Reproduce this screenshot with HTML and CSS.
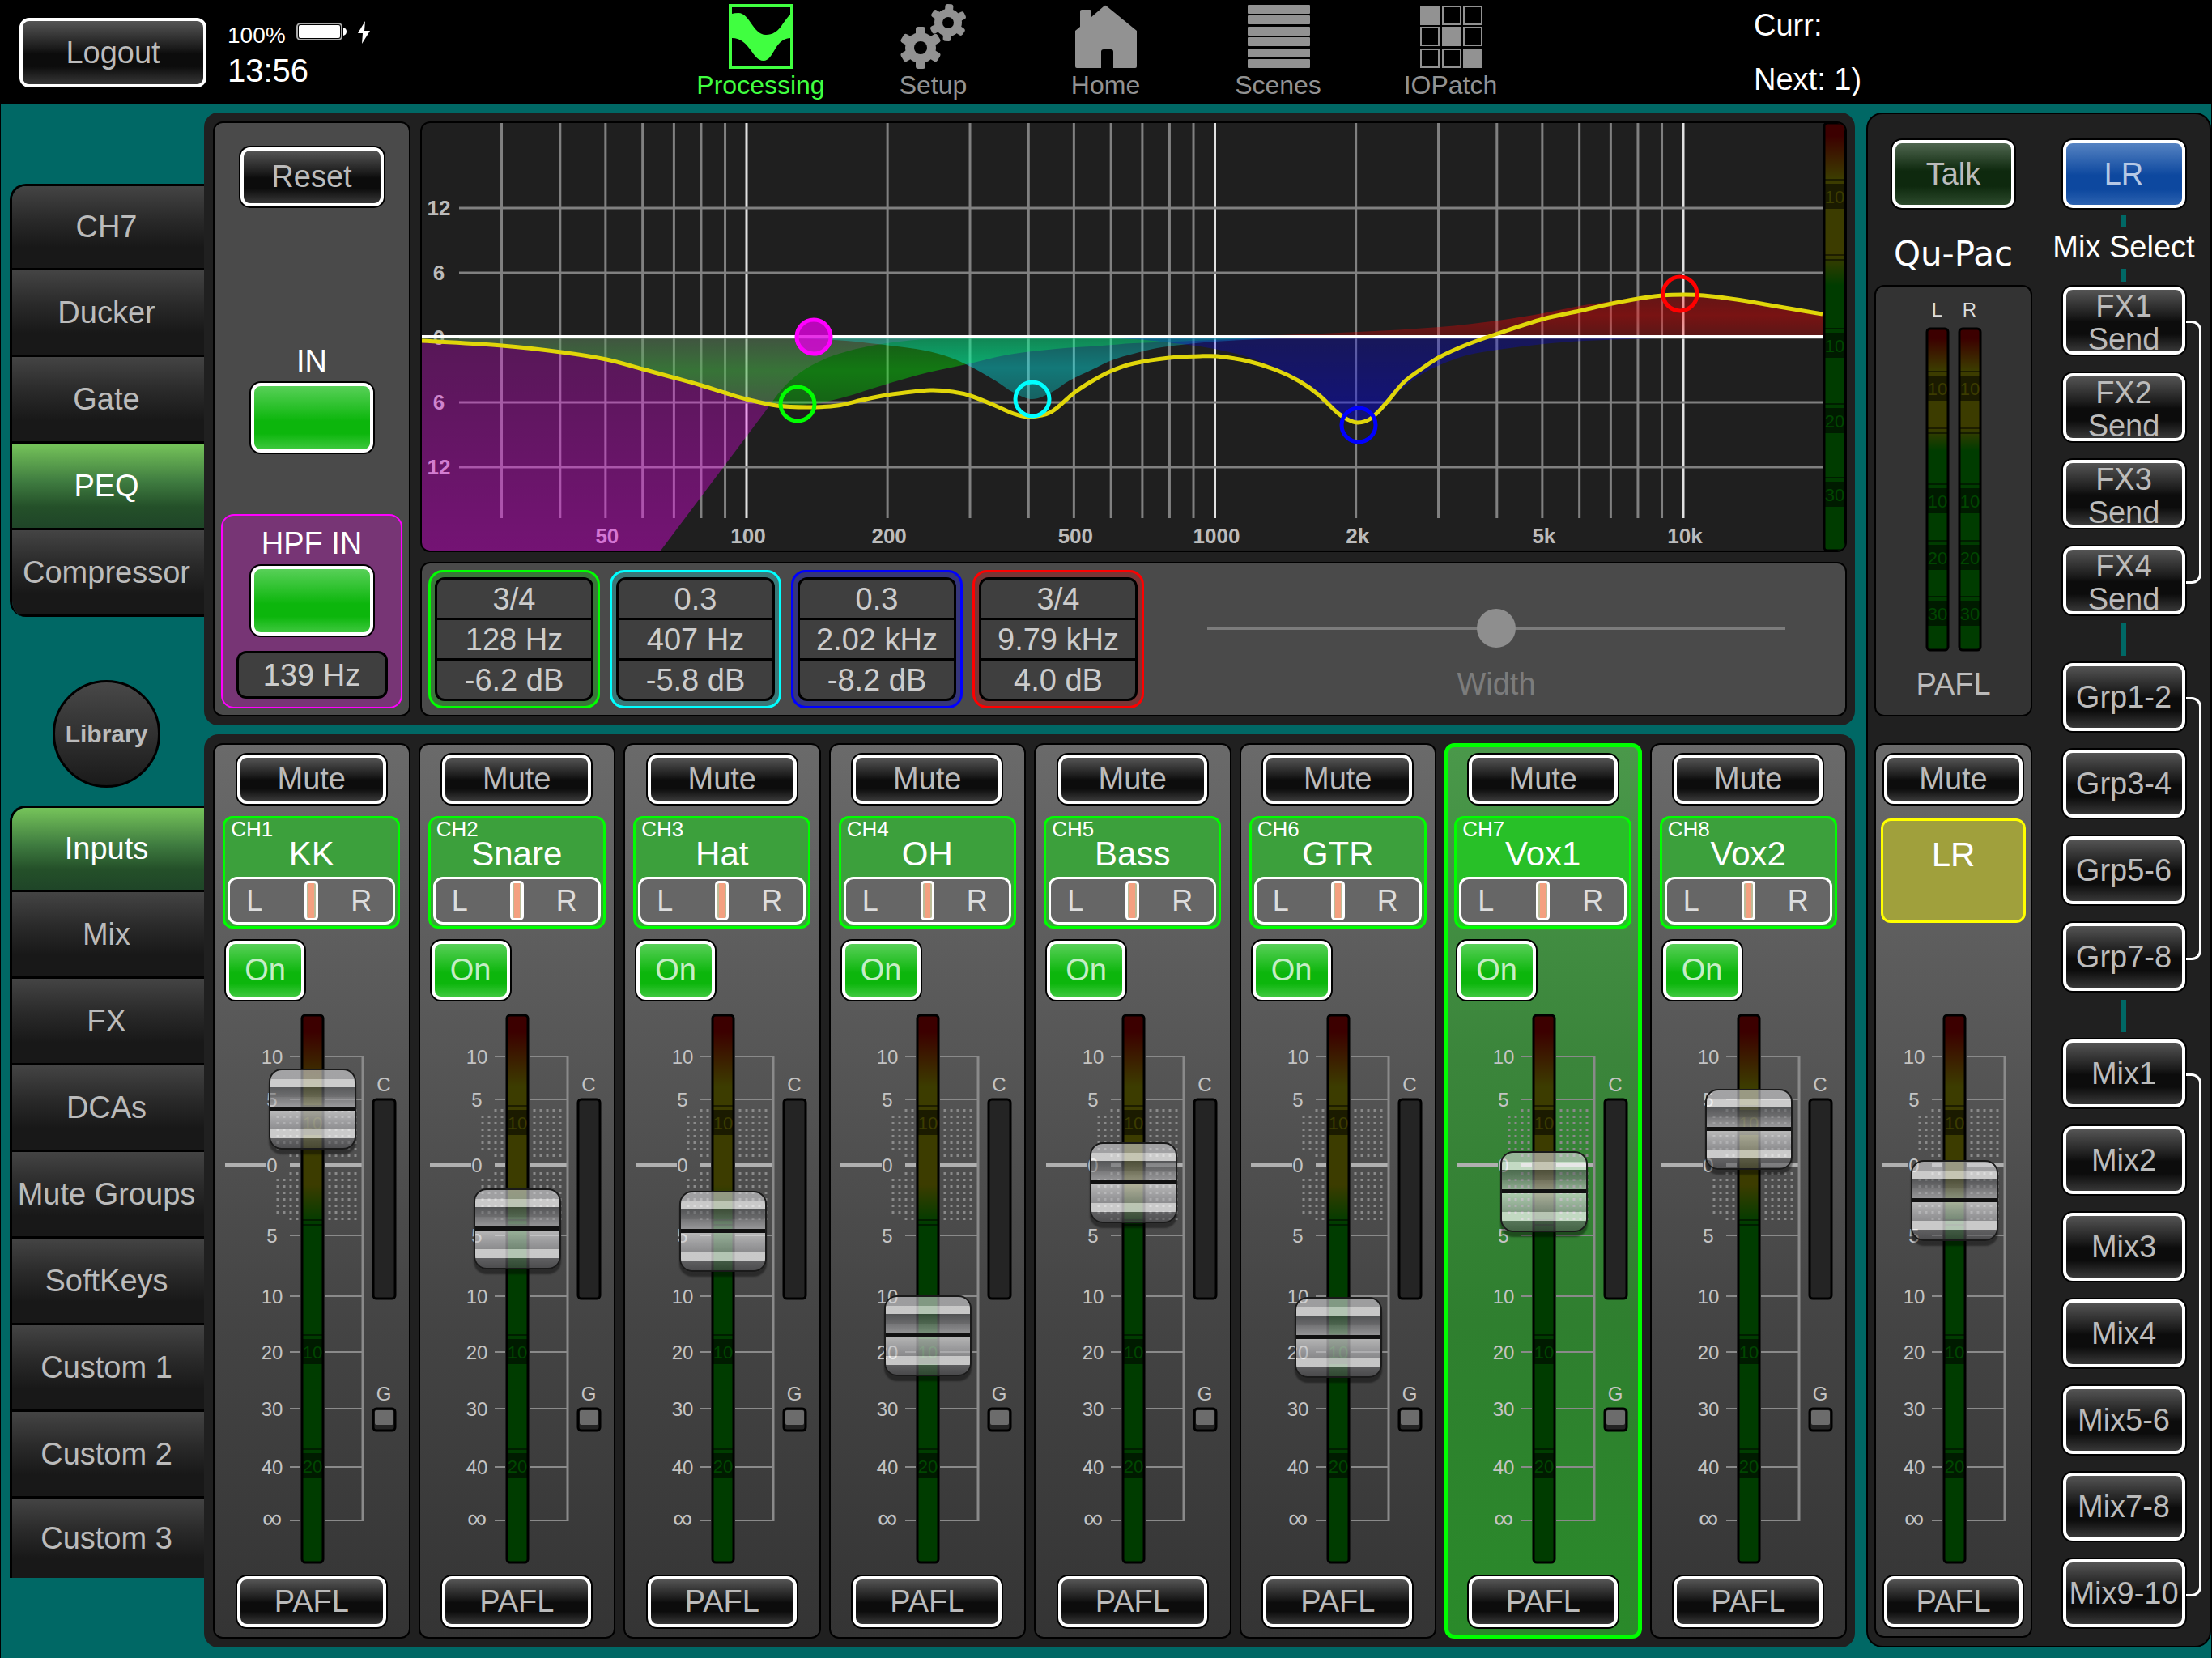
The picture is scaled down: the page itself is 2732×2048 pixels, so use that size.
FILE: index.html
```html
<!DOCTYPE html>
<html lang="en">

<head>
    <meta charset="UTF-8">
    <title>Qu-Pac</title>
    <link rel="stylesheet" href="styles.css">
</head>

<body>

    <header>
        <button class="btn logout">Logout</button>

        <div class="status">
            <div class="battery">
                <span>100%</span>
                <svg width="64" height="26" viewBox="0 0 64 26">
                    <rect x="2" y="3" width="55" height="20" rx="4" fill="none" stroke="#aaa" stroke-width="2" />
                    <rect x="4" y="5" width="51" height="16" rx="2" fill="#fff" />
                    <path d="M59 8q4 1 4 5t-4 5z" fill="#fff" />
                </svg>
                <svg width="18" height="28" viewBox="0 0 18 28">
                    <path d="M10 0L1 15h6L6 28l10-16H9z" fill="#fff" />
                </svg>
            </div>
            <div class="clock">13:56</div>
        </div>

        <nav>
            <a href="#" class="valgt">
                <svg width="80" height="80" viewBox="0 0 80 80">
                    <rect width="80" height="80" fill="#40ff40" />
                    <path d="M4 4H76V13C66 22 63 38 46 38C30 38 26 11 12 11Q7 11 4 12z" fill="#000" />
                    <path d="M4 42C26 42 29 70 43 70C56 70 56 43 76 42V76H4z" fill="#000" />
                </svg>
                <span class="narrow">Processing</span>
            </a>
            <a href="#">
                <svg width="80" height="80" viewBox="0 0 80 80">
                    <g transform="translate(24 54)">
                        <circle r="19" />
                        <rect x="-6" y="-26" width="12" height="52" rx="3" />
                        <rect x="-6" y="-26" width="12" height="52" rx="3" transform="rotate(60)" />
                        <rect x="-6" y="-26" width="12" height="52" rx="3" transform="rotate(120)" />
                        <circle r="8" fill="#000" />
                    </g>
                    <g transform="translate(58 23)">
                        <circle r="17" />
                        <rect x="-5" y="-23" width="10" height="46" rx="3" transform="rotate(4)" />
                        <rect x="-5" y="-23" width="10" height="46" rx="3" transform="rotate(64)" />
                        <rect x="-5" y="-23" width="10" height="46" rx="3" transform="rotate(124)" />
                        <circle r="7" fill="#000" />
                    </g>
                </svg>
                <span>Setup</span>
            </a>
            <a href="#">
                <svg width="80" height="80" viewBox="-2 -2 80 80">
                    <path d="M38 0L76 31V75q0 2-2 2H47V57q0-3-3-3H35q-3 0-3 3V77H2q-2 0-2-2V31L6 26V7q0-2 2-2H18q2 0 2 2V14L35 1q2-2 3-1z" />
                </svg>
                <span>Home</span>
            </a>
            <a href="#">
                <svg width="80" height="80" viewBox="-2 -1 80 80">
                    <rect y="0" width="77" height="11" rx="1" />
                    <rect y="13" width="77" height="11" rx="1" />
                    <rect y="27" width="77" height="11" rx="1" />
                    <rect y="40" width="77" height="11" rx="1" />
                    <rect y="54" width="77" height="11" rx="1" />
                    <rect y="67" width="77" height="11" rx="1" />
                </svg>
                <span>Scenes</span>
            </a>
            <a href="#">
                <svg width="80" height="80" viewBox="-2 -2 80 80">
                    <g fill="none" stroke="#929292" stroke-width="2">
                        <rect x="28" y="1" width="22" height="22" />
                        <rect x="54" y="1" width="22" height="22" />
                        <rect x="1" y="27" width="22" height="22" />
                        <rect x="54" y="27" width="22" height="22" />
                        <rect x="1" y="54" width="22" height="22" />
                        <rect x="28" y="54" width="22" height="22" />
                    </g>
                    <rect x="0" y="0" width="24" height="24" />
                    <rect x="27" y="26" width="24" height="24" />
                    <rect x="53" y="53" width="24" height="24" />
                </svg>
                <span>IOPatch</span>
            </a>
        </nav>

        <div class="scene">
            <p>Curr:</p>
            <p>Next: 1)</p>
        </div>
    </header>

    <main>
        <aside class="side">
            <div class="tabs rounded">
                <button>CH7</button>
                <button>Ducker</button>
                <button>Gate</button>
                <button class="valgt">PEQ</button>
                <button>Compressor</button>
            </div>
            <button class="library narrow">Library</button>
            <div class="tabs">
                <button class="valgt">Inputs</button>
                <button>Mix</button>
                <button>FX</button>
                <button>DCAs</button>
                <button>Mute Groups</button>
                <button>SoftKeys</button>
                <button>Custom 1</button>
                <button>Custom 2</button>
                <button>Custom 3</button>
            </div>
        </aside>

        <div class="center">
            <section class="panel peq">
                <div class="box controls">
                    <button class="btn reset">Reset</button>
                    <label class="in" for="in">IN</label>
                    <button class="btn green" id="in"></button>
                    <div class="hpf">
                        <label for="hpfin">HPF IN</label>
                        <button class="btn green" id="hpfin"></button>
                        <div class="value">139 Hz</div>
                    </div>
                </div>

                <div class="eq">
                    <div class="graph">
                        <svg id="plot" viewBox="521 152 1730 528">
                            <defs>
                                <linearGradient id="level" x1="0" y1="0" x2="0" y2="1">
                                    <stop offset=".03" stop-color="#3c0000" />
                                    <stop offset=".13" stop-color="#3c3c00" />
                                    <stop offset=".31" stop-color="#3c3c00" />
                                    <stop offset=".38" stop-color="#003c00" />
                                </linearGradient>
                            </defs>
                            <g id="grid"></g>
                            <g id="bands"></g>
                            <path d="M521 416H2251" stroke="#fff" stroke-width="4" />
                            <g id="sum"></g>
                            <g id="handles"></g>
                        </svg>
                        <svg class="level" id="eqlevel" viewBox="0 0 26 528"></svg>
                    </div>

                    <div class="box params">
                        <div class="band lf">
                            <div>3/4</div>
                            <div>128 Hz</div>
                            <div>-6.2 dB</div>
                        </div>
                        <div class="band lm">
                            <div>0.3</div>
                            <div>407 Hz</div>
                            <div>-5.8 dB</div>
                        </div>
                        <div class="band hm">
                            <div>0.3</div>
                            <div>2.02 kHz</div>
                            <div>-8.2 dB</div>
                        </div>
                        <div class="band hf">
                            <div>3/4</div>
                            <div>9.79 kHz</div>
                            <div>4.0 dB</div>
                        </div>
                        <div class="width">
                            <input type="range" id="width" min="0" max="100" value="50">
                            <label for="width">Width</label>
                        </div>
                    </div>
                </div>
            </section>

            <section class="panel" id="bank"></section>
        </div>

        <aside class="panel master">
            <div class="left">
                <button class="btn talk">Talk</button>
                <div class="logo">Qu-Pac</div>
                <div class="box pafl">
                    <div class="meters">
                        <div>L<svg viewBox="-2 -2 30 400"></svg></div>
                        <div>R<svg viewBox="-2 -2 30 400"></svg></div>
                    </div>
                    <p>PAFL</p>
                </div>
                <div id="main"></div>
            </div>

            <div class="mixes">
                <button class="btn blue">LR</button>
                <i class="link"></i>
                <p>Mix Select</p>
                <i class="link"></i>
                <div class="group">
                    <button class="btn">FX1<br>Send</button>
                    <button class="btn">FX2<br>Send</button>
                    <button class="btn">FX3<br>Send</button>
                    <button class="btn">FX4<br>Send</button>
                </div>
                <i class="link long"></i>
                <div class="group">
                    <button class="btn">Grp1-2</button>
                    <button class="btn">Grp3-4</button>
                    <button class="btn">Grp5-6</button>
                    <button class="btn">Grp7-8</button>
                </div>
                <i class="link long"></i>
                <div class="group">
                    <button class="btn">Mix1</button>
                    <button class="btn">Mix2</button>
                    <button class="btn">Mix3</button>
                    <button class="btn">Mix4</button>
                    <button class="btn">Mix5-6</button>
                    <button class="btn">Mix7-8</button>
                    <button class="btn">Mix9-10</button>
                </div>
            </div>
        </aside>
    </main>

    <script src="script.js"></script>
</body>

</html>
```

FILE: styles.css
```css
* {
    box-sizing: border-box;
}

body {
    margin: 0;
    min-height: 100vh;
    display: flex;
    flex-direction: column;
    background-color: #006865;
    border-left: 1px solid #000;
    border-right: 1px solid #000;
    color: #fff;
    font-family: "Liberation Sans", Arial, sans-serif;
    font-size: 38px;
    line-height: 41px;
}

p {
    margin: 0;
}

button {
    font: inherit;
    color: #bbb;
    padding: 0;
    cursor: pointer;
}

svg {
    display: block;
    overflow: visible;
}

.narrow {
    font-family: "Liberation Sans Narrow", "Liberation Sans", sans-serif;
}

/* header */

header {
    position: relative;
    display: flex;
    align-items: flex-start;
    height: 128px;
    background-color: #000;
}

.logout {
    width: 231px;
    height: 86px;
    margin: 22px 26px 0 23px;
}

.status {
    padding-top: 26px;
}

.battery {
    display: flex;
    gap: 12px;
    font-size: 28px;
    line-height: 36px;
}

.clock {
    font-size: 40px;
    line-height: 50px;
}

nav {
    display: grid;
    grid-template-columns: repeat(5, 213px);
    position: absolute;
    left: 832px;
    top: 5px;
}

nav a {
    display: flex;
    flex-direction: column;
    align-items: center;
    color: #929292;
    fill: #929292;
    font-size: 32px;
    text-decoration: none;
}

nav .valgt {
    color: #40ff40;
}

.scene {
    width: 565px;
    margin-left: auto;
    line-height: 67px;
    margin-top: -2px;
}

/* buttons */

.btn {
    display: block;
    border: 4px solid #fff;
    border-radius: 12px;
    box-shadow: 0 0 0 2px #000;
    background: linear-gradient(#555, #1c1c1c 42%, #0c0c0c 52%, #0c0c0c 72%, #383838);
}

.green {
    color: #c5edc5;
    background: linear-gradient(#58d058, #0cb60c 55%, #0cb60c 75%, #3ec83e);
}

.talk {
    background: linear-gradient(#4f664f, #0e290e 45%, #0e290e 70%, #2c4a2c);
}

.blue {
    color: #b5c8e5;
    background: linear-gradient(#5583c2, #0d489f 52%, #0d489f 75%, #2c62b0);
}

/* layout */

main {
    flex: 1;
    display: grid;
    grid-template-columns: 251px minmax(0, 1fr) 426px;
    padding: 11px 0 14px;
}

.panel {
    background-color: #202020;
    border-radius: 18px;
}

.box {
    border: 2px solid #000;
    border-radius: 12px;
    background-color: #4a4a4a;
}

.center {
    display: flex;
    flex-direction: column;
    gap: 11px;
    min-width: 0;
    margin-right: 14px;
}

/* side tabs */

.side {
    padding: 88px 0 0 11px;
}

.tabs {
    border: 3px solid #000;
    border-width: 3px 0 0 3px;
    border-radius: 20px 0 0 0;
    overflow: hidden;
}

.tabs button {
    display: block;
    width: 100%;
    height: 107px;
    padding-right: 4px;
    border: 0;
    border-bottom: 3px solid #000;
    background: linear-gradient(#444, #2a2a2a 40%, #181818 75%);
}

.tabs button:first-child {
    height: 104px;
}

.tabs .valgt {
    color: #fff;
    background: linear-gradient(#76c45a, #3f7c40 45%, #245029 75%, #1f4528);
}

.tabs.rounded {
    border-radius: 20px 0 0 20px;
}

.tabs:not(.rounded) button:last-child {
    height: 98px;
    border-bottom: 0;
}

.library {
    display: block;
    width: 133px;
    height: 133px;
    margin: 78px 0 22px 53px;
    border: 3px solid #000;
    border-radius: 50%;
    background: linear-gradient(#484848, #1a1a1a);
    font-size: 30px;
    font-weight: bold;
}

/* peq */

.peq {
    display: flex;
    gap: 12px;
    padding: 11px 10px 11px 11px;
    height: 757px;
}

.controls {
    flex: none;
    width: 244px;
    padding: 30px 8px 0;
    display: flex;
    flex-direction: column;
    align-items: center;
}

.reset {
    width: 177px;
    height: 73px;
}

.in {
    margin: 171px 0 6px;
}

.controls .green {
    width: 151px;
    height: 86px;
}

.hpf {
    width: 100%;
    height: 240px;
    margin-top: 76px;
    padding-top: 14px;
    display: flex;
    flex-direction: column;
    align-items: center;
    gap: 7px;
    border: 2px solid #f0f;
    border-radius: 16px;
    background-color: #773575;
}

.value {
    width: 187px;
    height: 59px;
    margin-top: 12px;
    border: 3px solid #000;
    border-radius: 12px;
    background-color: #3f3f3f;
    color: #ccc;
    line-height: 54px;
    text-align: center;
}

.eq {
    flex: 1;
    min-width: 0;
}

.graph {
    display: flex;
    gap: 2px;
    height: 532px;
    margin-bottom: 12px;
    border: 2px solid #000;
    border-radius: 12px;
    overflow: hidden;
    background-color: #1f1f1f;
}

#plot {
    flex: 1;
    min-width: 0;
    height: 528px;
    overflow: hidden;
    font-size: 26px;
    font-weight: bold;
}

.graph .level {
    width: 26px;
    height: 528px;
}

.level text,
.meters text,
.fader .mark {
    font-size: 22px;
    font-weight: normal;
}

.params {
    display: flex;
    gap: 12px;
    height: 191px;
    padding: 8px;
}

.band {
    width: 212px;
    height: 171px;
    padding: 6px 5px;
    border: 3px solid;
    border-radius: 18px;
}

.band div {
    height: 53px;
    margin-bottom: -3px;
    border: 3px solid #000;
    background-color: #3f3f3f;
    color: #ccc;
    line-height: 49px;
    text-align: center;
}

.band div:first-child {
    border-radius: 12px 12px 0 0;
}

.band div:last-child {
    border-radius: 0 0 12px 12px;
}

.lf {
    border-color: #0f0;
    background-color: #3a773a;
}

.lm {
    border-color: #0ff;
    background-color: #3a7777;
}

.hm {
    border-color: #00f;
    background-color: #35357a;
}

.hf {
    border-color: #f00;
    background-color: #7a3535;
}

.width {
    flex: 1;
    padding: 48px 66px 0;
    text-align: center;
    color: #7c7c7c;
}

.width label {
    display: block;
    margin-top: 25px;
}

input[type=range] {
    -webkit-appearance: none;
    appearance: none;
    display: block;
    margin: 0;
    background: none;
}

.width input {
    width: 100%;
    height: 48px;
    background: linear-gradient(#7c7c7c, #7c7c7c) center / 100% 3px no-repeat;
}

.width input::-webkit-slider-thumb {
    -webkit-appearance: none;
    width: 48px;
    height: 48px;
    border-radius: 50%;
    background-color: #8e8e8e;
}

/* strips */

#bank {
    flex: 1;
    display: grid;
    grid-template-columns: repeat(8, minmax(0, 1fr));
    gap: 10px;
    padding: 11px 10px 11px 11px;
}

.strip {
    display: flex;
    flex-direction: column;
    align-items: center;
    gap: 13px;
    padding: 10px 0 9px;
    border: 2px solid #000;
    border-radius: 12px;
    background: linear-gradient(#6a6a6a, #565656 35%, #444 65%, #343434);
}

.strip.selected {
    border: 5px solid #0f0;
    padding: 7px 0 6px;
    background: linear-gradient(#4a984a, #3b853b 35%, #2f7f2f 65%, #2a8a2a);
}

.strip .mute,
.strip .listen {
    width: 184px;
    height: 61px;
    margin: 2px 0;
}

.strip .listen {
    height: 63px;
}

.name {
    position: relative;
    width: 219px;
    height: 139px;
    padding: 3px 3px 0;
    border: 3px solid #0f0;
    border-radius: 12px;
    background-color: #3ca03c;
    text-align: center;
}

.selected .name {
    background-color: #28c028;
}

.name small {
    display: block;
    padding-left: 4px;
    font-size: 26px;
    line-height: 20px;
    text-align: left;
}

.name h2 {
    margin: 0;
    font-size: 42px;
    font-weight: normal;
    line-height: 42px;
}

.pan {
    position: absolute;
    left: 3px;
    right: 3px;
    bottom: 2px;
    height: 59px;
    display: flex;
    justify-content: space-between;
    padding: 0 26px 0 20px;
    border: 3px solid #fff;
    border-radius: 12px;
    background-color: #666;
    color: #ddd;
    font-size: 36px;
    line-height: 53px;
}

.pan input {
    position: absolute;
    left: 0;
    top: 2px;
    width: 100%;
    height: 49px;
}

.pan input::-webkit-slider-thumb {
    -webkit-appearance: none;
    width: 17px;
    height: 49px;
    border: 3px solid #fff;
    border-radius: 5px;
    background: linear-gradient(90deg, #bcbc98 2px, #f4a080 2px, #f4a080 9px, #bcbc98 9px);
}

.on {
    align-self: flex-start;
    width: 97px;
    height: 73px;
    margin: 2px 0 2px 14px;
}

.selected .on {
    margin-left: 11px;
}

.fader {
    position: relative;
    display: flex;
    justify-content: center;
    width: 100%;
    height: 682px;
}

.fader svg {
    flex: none;
    font-size: 24px;
    fill: #c4c4c4;
}

.fader .inf {
    font-size: 34px;
}

.fader input {
    position: absolute;
    left: 50%;
    top: 5px;
    width: 108px;
    height: 673px;
    margin-left: -53px;
    writing-mode: vertical-lr;
    direction: rtl;
}

.fader input::-webkit-slider-thumb {
    -webkit-appearance: none;
    width: 108px;
    height: 100px;
    border: 2px solid #1a1a1a;
    border-radius: 16px;
    box-shadow: 0 6px 2px rgba(0, 0, 0, .4);
    background: linear-gradient(
        rgba(215, 215, 218, .6) 0, rgba(215, 215, 218, .6) 11%,
        rgba(255, 255, 255, .7) 11%, rgba(255, 255, 255, .7) 22%,
        rgba(90, 92, 95, .6) 22%, rgba(130, 130, 133, .6) 34%,
        rgba(150, 150, 153, .6) 35%, rgba(200, 200, 203, .6) 47%,
        #111 47%, #111 52%,
        rgba(255, 255, 255, .6) 52%, rgba(200, 200, 203, .65) 66%,
        rgba(175, 175, 178, .65) 76%,
        rgba(255, 255, 255, .7) 76%, rgba(255, 255, 255, .7) 88%,
        rgba(110, 110, 113, .6) 88%, rgba(80, 80, 83, .6));
}

/* master */

.master {
    display: flex;
    justify-content: space-between;
    padding: 30px 29px 10px 8px;
    border: 2px solid #000;
    border-radius: 20px;
}

.left {
    width: 195px;
    display: flex;
    flex-direction: column;
    align-items: center;
}

.left .talk,
.mixes .btn {
    width: 151px;
    height: 84px;
    margin: 2px;
}

.logo {
    margin: 34px 0 18px;
    font-family: "DejaVu Sans", sans-serif;
    font-size: 42px;
}

.pafl {
    width: 195px;
    height: 533px;
    padding-top: 17px;
    margin-bottom: 33px;
    background-color: #333;
    color: #bbb;
    text-align: center;
}

.meters {
    display: flex;
    justify-content: center;
    gap: 10px;
    margin-bottom: 21px;
    color: #ddd;
    font-size: 24px;
    line-height: 24px;
}

.meters svg {
    width: 30px;
    height: 400px;
    margin-top: 9px;
}

#main {
    width: 195px;
}

.lr .mute,
.lr .listen {
    width: 171px;
}

.lr .name {
    width: 179px;
    height: 129px;
    margin: 3px 0 97px;
    padding-top: 21px;
    border-color: #ff0;
    background-color: #a0a03c;
}

.mixes {
    display: flex;
    flex-direction: column;
    align-items: center;
    width: 180px;
    margin-right: -13px;
    white-space: nowrap;
}

.link {
    width: 6px;
    height: 16px;
    margin: 6px 0 4px;
    background-color: #006865;
}

.link.long {
    height: 40px;
    margin: 9px 0 7px;
}

.group {
    position: relative;
    display: flex;
    flex-direction: column;
    gap: 19px;
}

.group::after {
    content: "";
    position: absolute;
    top: 44px;
    bottom: 40px;
    right: -18px;
    width: 16px;
    border: 3px solid #fff;
    border-left: 0;
    border-radius: 0 12px 12px 0;
}
```

FILE: script.js
```js
const channels = [
    { ch: "CH1", name: "KK", level: 508 },
    { ch: "CH2", name: "Snare", level: 360 },
    { ch: "CH3", name: "Hat", level: 357 },
    { ch: "CH4", name: "OH", level: 228 },
    { ch: "CH5", name: "Bass", level: 417 },
    { ch: "CH6", name: "GTR", level: 226 },
    { ch: "CH7", name: "Vox1", level: 406, selected: true },
    { ch: "CH8", name: "Vox2", level: 483 }
];

// fader scale: label and height in px from the top of the fader
const scale = [["10", 55], ["5", 108], ["0", 189], ["5", 276], ["10", 351], ["20", 420], ["30", 490], ["40", 562], ["∞", 628]];

// level meter, marks are [label, y], zero is the y of the double line
function meter(x, y, w, h, marks, zero) {
    let s = `<rect x="${x}" y="${y}" width="${w}" height="${h}" rx="4" fill="url(#level)" stroke="#000" stroke-width="3"/>`;
    s += `<path d="M${x + 1} ${zero}h${w - 2}m0 6h${2 - w}" stroke="rgba(0,0,0,.5)" stroke-width="2"/>`;
    marks.forEach(([label, my]) => {
        const color = my < zero ? "#3c3c00" : "#004600";
        s += `<rect x="${x + 1}" y="${my}" width="${w - 2}" height="31" fill="rgba(0,0,0,.55)"/>`;
        s += `<path d="M${x + 1} ${my - 5}h${w - 2}" stroke="rgba(0,0,0,.5)" stroke-width="2"/>`;
        s += `<text class="mark" x="${x + w / 2}" y="${my + 24}" text-anchor="middle" fill="${color}">${label}</text>`;
    });
    return s;
}

function faderScale(half, full) {
    let s = "";
    scale.forEach(([label, y]) => {
        const w = label == "0" ? 5 : 2;
        const color = label == "0" ? "#b0b0b0" : "#8a8a8a";
        s += `<path d="M-28 ${y}h13M15 ${y}h46" stroke="${color}" stroke-width="${w}"/>`;
        s += `<text class="${label == "∞" ? "inf" : ""}" x="-50" y="${y + 9}" text-anchor="middle">${label}</text>`;
    });
    s += `<path d="M${full ? -108 : -90} 189H-57" stroke="#b0b0b0" stroke-width="5"/>`;
    s += `<path d="M62 54V629" stroke="#8a8a8a" stroke-width="3"/>`;
    // dotted areas around 0
    s += `<path d="M-43 128v46M-35 128v46M-43 206v46M-35 206v46" stroke="#8a8a8a" stroke-width="3" stroke-dasharray="3 5"/>`;
    [-27, -19, 21, 29, 37, 45, 53].forEach(x => {
        s += `<path d="M${x} 120v62M${x} 198v62" stroke="#8a8a8a" stroke-width="3" stroke-dasharray="3 5"/>`;
    });
    s += meter(-13, 4, 26, 676, [["10", 121], ["10", 404], ["20", 545]], 257);
    if (full) {
        s += `<text x="88" y="98" text-anchor="middle">C</text>`;
        s += `<rect x="75" y="108" width="27" height="246" rx="4" fill="#242424" stroke="#000" stroke-width="3"/>`;
        s += `<text x="88" y="480" text-anchor="middle">G</text>`;
        s += `<rect x="75" y="490" width="27" height="27" rx="4" fill="#242424" stroke="#000" stroke-width="3"/>`;
        s += `<rect x="77" y="492" width="23" height="18" rx="2" fill="#6c6c6c"/>`;
    }
    return `<svg width="${half * 2}" height="682" viewBox="${-half - 1} 0 ${half * 2} 682">${s}</svg>`;
}

function strip(c) {
    const input = c.ch != "LR";
    return `<article class="strip ${c.selected ? "selected" : ""} ${input ? "" : "lr"}">
        <button class="btn mute">Mute</button>
        <div class="name">
            ${input ? `<small>${c.ch}</small>` : ""}
            <h2>${c.name}</h2>
            ${input ? `<div class="pan"><span>L</span><span>R</span><input type="range" aria-label="${c.name} pan" min="-50" max="50" value="0"></div>` : ""}
        </div>
        ${input ? `<button class="btn green on">On</button>` : ""}
        <div class="fader">
            ${faderScale(input ? 118 : 94, input)}
            <input type="range" aria-label="${c.name} fader" min="0" max="573" value="${c.level}">
        </div>
        <button class="btn listen">PAFL</button>
    </article>`;
}

document.querySelector("#bank").innerHTML = channels.map(strip).join("");
document.querySelector("#main").innerHTML = strip({ ch: "LR", name: "LR", level: 395 });

document.querySelector("#eqlevel").innerHTML = meter(0, 0, 26, 528, [["10", 75], ["10", 259], ["20", 352], ["30", 443]], 163);
document.querySelectorAll(".meters svg").forEach(svg => {
    svg.innerHTML = meter(0, 0, 26, 397, [["10", 58], ["10", 197], ["20", 267], ["30", 336]], 123);
});

// EQ plot
const freqX = f => 922 + 578.5 * Math.log10(f / 100);
let grid = "";
for (const decade of [10, 100, 1000]) {
    for (let n = 1; n < 10; n++) {
        const f = decade * n;
        if (f < 30) continue;
        grid += `<path d="M${freqX(f)} 152V640" stroke="${n == 1 ? "#e0e0e0" : "#808080"}" stroke-width="3"/>`;
    }
}
grid += `<path d="M${freqX(10000)} 152V640" stroke="#e0e0e0" stroke-width="3"/>`;
[[257, "12"], [337, "6"], [417, "0"], [497, "6"], [577, "12"]].forEach(([y, label]) => {
    grid += `<path d="M567 ${y}H2251" stroke="#808080" stroke-width="3"/>`;
    grid += `<text x="542" y="${y + 9}" text-anchor="middle" fill="#bbb">${label}</text>`;
});
[[50, "50"], [100, "100"], [200, "200"], [500, "500"], [1000, "1000"], [2000, "2k"], [5000, "5k"], [10000, "10k"]].forEach(([f, label]) => {
    grid += `<text x="${freqX(f) + 2}" y="671" text-anchor="middle" fill="#bbb">${label}</text>`;
});
document.querySelector("#grid").innerHTML = grid;

// smooth line through the points
function curve(p) {
    let d = `${p[0][0]} ${p[0][1]}`;
    for (let i = 0; i < p.length - 1; i++) {
        const a = p[i - 1] || p[i], b = p[i], c = p[i + 1], e = p[i + 2] || c;
        const k = (c[0] - b[0]) / 3;
        const sb = (c[1] - a[1]) / (c[0] - a[0]);
        const sc = (e[1] - b[1]) / (e[0] - b[0]);
        d += `C${b[0] + k} ${b[1] + k * sb} ${c[0] - k} ${c[1] - k * sc} ${c[0]} ${c[1]}`;
    }
    return d;
}

const hpf = "M521 416V680H816L952 499" +
    "C985 450 1030 421 1200 416Z";

const lf = [[521, 421], [620, 427], [693, 435], [749, 444], [794, 456], [834, 467], [866, 476], [895, 485], [922, 492], [955, 498], [985, 500], [1011, 498], [1045, 490], [1074, 481], [1103, 472], [1131, 464], [1160, 457], [1189, 451], [1246, 438], [1304, 431], [1361, 427], [1400, 424], [1550, 418]];
const lm = [[970, 417], [1045, 421], [1074, 424], [1131, 431], [1166, 439], [1195, 451], [1229, 470], [1252, 485], [1275, 493], [1298, 485], [1321, 470], [1350, 456], [1373, 445], [1400, 437], [1429, 430], [1459, 426], [1500, 422], [1600, 417]];
const hm = [[1330, 417], [1400, 419], [1459, 425], [1500, 431], [1541, 441], [1576, 455], [1605, 471], [1629, 488], [1652, 510], [1677, 523], [1694, 517], [1711, 501], [1734, 478], [1758, 461], [1778, 451], [1811, 439], [1850, 432], [1906, 425], [1957, 421], [2080, 417]];
const hf = [[1500, 416], [1576, 414], [1677, 410], [1778, 404], [1850, 396], [1906, 387], [1951, 378], [1991, 372], [2023, 367], [2053, 365], [2080, 364], [2104, 365], [2145, 370], [2186, 377], [2251, 388]];
const sum = [[521, 421], [620, 427], [693, 435], [749, 444], [794, 456], [834, 467], [866, 476], [895, 485], [922, 493], [959, 501], [997, 503], [1034, 501], [1065, 494], [1095, 488], [1149, 482], [1177, 484], [1199, 489], [1229, 501], [1252, 511], [1271, 515], [1298, 509], [1327, 485], [1350, 470], [1373, 458], [1400, 449], [1444, 442], [1482, 440], [1503, 440], [1541, 446], [1576, 457], [1605, 471], [1629, 488], [1652, 510], [1664, 518], [1677, 522], [1693, 517], [1711, 499], [1734, 472], [1758, 454], [1778, 441], [1811, 426], [1850, 412], [1906, 394], [1951, 384], [1991, 375], [2023, 369], [2053, 365], [2080, 364], [2104, 365], [2145, 370], [2186, 377], [2251, 388]];

function fill(points, color, id, peak) {
    const grad = `<linearGradient id="${id}" gradientUnits="userSpaceOnUse" x1="0" y1="416" x2="0" y2="${peak}">
        <stop offset="0" stop-color="${color}" stop-opacity=".26"/>
        <stop offset=".5" stop-color="${color}" stop-opacity=".4"/>
        <stop offset="1" stop-color="${color}" stop-opacity=".3"/></linearGradient>`;
    return `${grad}<path d="M${points[0][0]} 416L${curve(points)}V416Z" fill="url(#${id})"/>`;
}

document.querySelector("#bands").innerHTML =
    `<linearGradient id="hpffill" x1="0" y1="0" x2="0" y2="1">
        <stop offset="0" stop-color="#f0f" stop-opacity=".25"/>
        <stop offset="1" stop-color="#f0f" stop-opacity=".38"/></linearGradient>
    <path d="${hpf}" fill="url(#hpffill)"/>` +
    fill(lf, "#0f0", "lf", 500) + fill(lm, "#0ff", "lm", 493) + fill(hm, "#00f", "hm", 600) + fill(hf, "#f00", "hf", 363);

document.querySelector("#sum").innerHTML = `<path d="M${curve(sum)}" fill="none" stroke="#e0d60a" stroke-width="5"/>`;

document.querySelector("#handles").innerHTML = [[1005, 416, "#f0f"], [985, 499, "#0f0"], [1275, 493, "#0ff"], [1678, 525, "#00f"], [2075, 363, "#f00"]]
    .map(([x, y, c]) => `<circle cx="${x}" cy="${y}" r="21" fill="${c == "#f0f" ? "rgba(225,0,225,.8)" : "none"}" stroke="${c}" stroke-width="5"/>`).join("");
```
